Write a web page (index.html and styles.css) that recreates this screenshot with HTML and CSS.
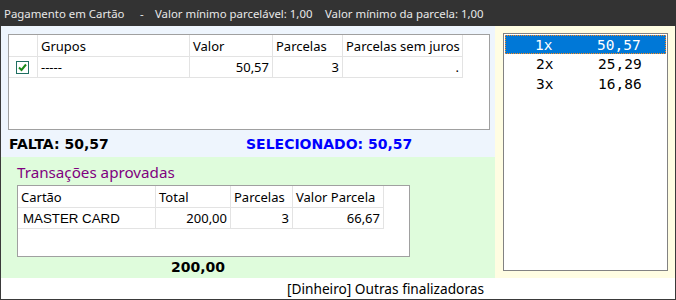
FILE: index.html
```html
<!DOCTYPE html>
<html lang="pt">
<head>
<meta charset="utf-8">
<title>Pagamento em Cartão</title>
<link rel="stylesheet" href="styles.css">
</head>
<body>
<div class="window">
  <div class="titlebar">
    <span class="t1">Pagamento em Cartão</span>
    <span class="t2">-</span>
    <span class="t3">Valor mínimo parcelável: 1,00</span>
    <span class="t4">Valor mínimo da parcela: 1,00</span>
  </div>
  <div class="main">
    <div class="left">
      <div class="pane-blue">
        <div class="grid grid1">
          <div class="row head">
            <div class="cell"></div>
            <div class="cell">Grupos</div>
            <div class="cell">Valor</div>
            <div class="cell">Parcelas</div>
            <div class="cell">Parcelas sem juros</div>
          </div>
          <div class="row data">
            <div class="cell chk">
              <span class="checkbox">
                <svg width="11" height="11" viewBox="0 0 11 11"><path d="M2 5.5 L4.5 8 L9 2.5" fill="none" stroke="#1a8a1a" stroke-width="2"/></svg>
              </span>
            </div>
            <div class="cell">-----</div>
            <div class="cell num">50,57</div>
            <div class="cell num">3</div>
            <div class="cell num">.</div>
          </div>
        </div>
        <div class="totals">
          <span class="falta">FALTA: 50,57</span>
          <span class="sel">SELECIONADO: 50,57</span>
        </div>
      </div>
      <div class="pane-green">
        <div class="trans-title">Transações aprovadas</div>
        <div class="grid grid2">
          <div class="row head">
            <div class="cell">Cartão</div>
            <div class="cell">Total</div>
            <div class="cell">Parcelas</div>
            <div class="cell">Valor Parcela</div>
          </div>
          <div class="row data">
            <div class="cell card">MASTER CARD</div>
            <div class="cell num">200,00</div>
            <div class="cell num">3</div>
            <div class="cell num">66,67</div>
          </div>
        </div>
        <div class="sum">200,00</div>
      </div>
    </div>
    <div class="right">
      <div class="listbox">
        <div class="item selected"><span class="q">1x</span><span class="v">50,57</span></div>
        <div class="item"><span class="q">2x</span><span class="v">25,29</span></div>
        <div class="item"><span class="q">3x</span><span class="v">16,86</span></div>
      </div>
    </div>
  </div>
  <div class="footer">[Dinheiro] Outras finalizadoras</div>
</div>
</body>
</html>
```
FILE: styles.css
```css
* { box-sizing: border-box; }
html, body { margin: 0; padding: 0; background: #ffffff; }
body { font-family: "Noto Sans", "Open Sans", sans-serif; color: #000; }

.window {
  width: 676px;
  height: 300px;
  border: 1px solid #3a3a3a;
  border-top: 0;
  display: flex;
  flex-direction: column;
  background: #fff;
}

.titlebar {
  height: 26px;
  margin: 0 -1px;
  background: #333333;
  color: #e8e8e8;
  font-size: 11.4px;
  display: flex;
  align-items: center;
  padding-left: 4px;
  white-space: nowrap;
}
.t1 { width: 136px; }
.t2 { width: 15px; }
.t3 { width: 170px; }

.main {
  height: 252px;
  display: flex;
}
.left {
  width: 494px;
  display: flex;
  flex-direction: column;
}
.pane-blue {
  height: 131px;
  background: #eef5fd;
  padding: 8px 0 0 7px;
}
.pane-green {
  height: 121px;
  background: #dffcdc;
  padding: 4px 0 0 16px;
}
.right {
  width: 180px;
  background: #fffde2;
  padding: 7px 0 0 8px;
}

.grid {
  background: #fff;
  border: 1px solid #a0a0a0;
  font-size: 13px;
}
.grid1 { width: 482px; height: 96px; }
.grid2 { width: 393px; height: 72px; }

.row { display: grid; }
.grid1 .row { grid-template-columns: 29px 152px 83px 70px 120px; }
.grid2 .row { grid-template-columns: 138px 75px 62px 91px; }
.row.head { height: 22px; }
.row.data { height: 21px; }

.cell {
  border-right: 1px solid #e3e3e3;
  border-bottom: 1px solid #e3e3e3;
  padding: 0 3px;
  display: flex;
  align-items: center;
  white-space: nowrap;
  overflow: hidden;
}
.cell.num { justify-content: flex-end; }
.cell.chk { justify-content: center; padding: 0; }
.cell.card { font-family: "Liberation Sans", Arial, sans-serif; font-size: 13.3px; padding-left: 5px; }

.checkbox {
  width: 13px;
  height: 13px;
  border: 1px solid #1f6f62;
  background: #fff;
  display: flex;
  align-items: center;
  justify-content: center;
  margin-left: -2px;
}

.totals {
  height: 27px;
  display: flex;
  align-items: center;
  font-family: "DejaVu Sans", Verdana, sans-serif;
  font-weight: bold;
  font-size: 14px;
  padding-left: 1px;
  padding-top: 1px;
}
.falta { color: #000; width: 237px; }
.sel { color: #0000ff; }

.trans-title {
  color: #800080;
  font-size: 15.2px;
  height: 24px;
  line-height: 22px;
}

.sum {
  font-family: "DejaVu Sans", Verdana, sans-serif;
  font-weight: bold;
  font-size: 14px;
  padding-left: 154px;
  padding-top: 2px;
}

.listbox {
  width: 165px;
  height: 238px;
  background: #fff;
  border: 1px solid #828282;
  padding: 1px;
  font-family: "DejaVu Sans Mono", "Liberation Mono", monospace;
  font-size: 14.5px;
}
.item {
  height: 20px;
  display: flex;
  align-items: center;
  padding-left: 31px;
  white-space: pre;
  color: #000;
}
.item.selected {
  height: 19px;
  background: #0078d7;
  color: #fff;
  border: 1px dotted #ff8c1a;
  padding-left: 29px;
}
.q { width: 62px; }

.footer {
  height: 21px;
  font-size: 13.7px;
  text-align: right;
  padding-right: 191px;
  line-height: 21px;
}
```
